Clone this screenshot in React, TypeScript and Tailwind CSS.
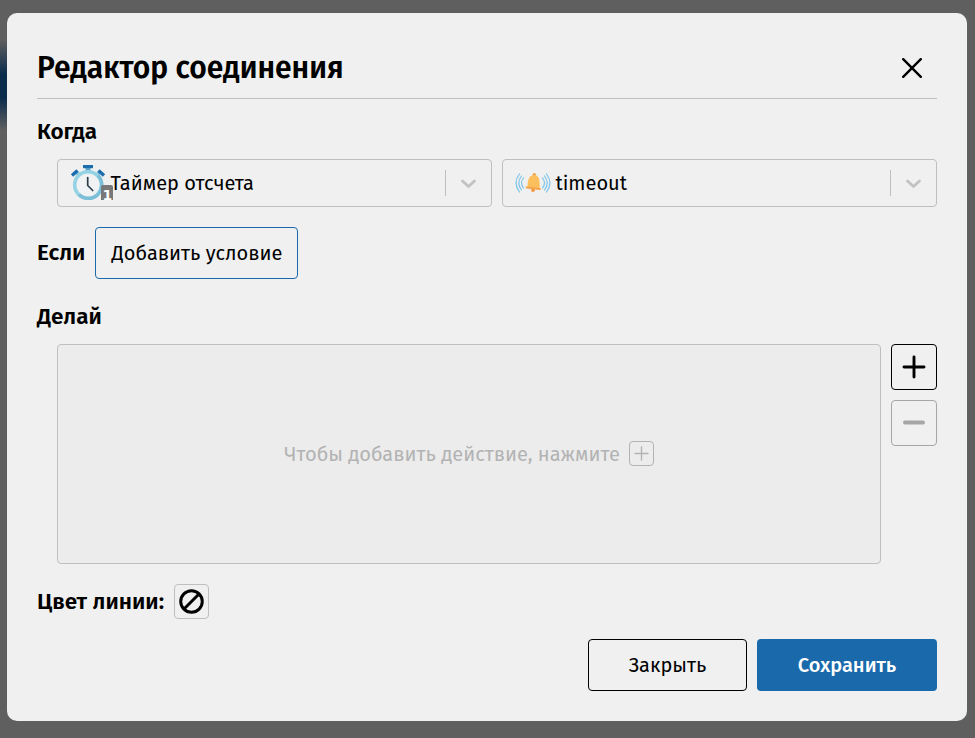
import React from "react";

const Chevron = () => (
  <div className="flex h-full items-center">
    <div className="h-[26px] w-px bg-[#bfbfbf]" />
    <div className="flex w-[45px] items-center justify-center">
      <svg width="17" height="11" viewBox="0 0 17 11" fill="none" stroke="#c2c2c2" strokeWidth="2.800" strokeLinecap="round" strokeLinejoin="round">
        <path d="M2.500 3l6 5.600L14.500 3" />
      </svg>
    </div>
  </div>
);

const Timer = () => (
  <svg width="44" height="40" viewBox="0 0 44 40" className="shrink-0 overflow-visible">
    <rect x="15.500" y="5" width="5" height="5" fill="#5fa3c8" />
    <path d="M6 9l4 4M30 9l-4 4" stroke="#8cc4dc" strokeWidth="4" />
    <rect x="13" y="2" width="10" height="3.200" fill="#1b6eae" />
    <path d="M2 12.500L7.500 7.500M28.500 7.500L34 12.500" stroke="#1b6eae" strokeWidth="3.400" />
    <circle cx="18" cy="22" r="13.300" fill="#f0f2f3" stroke="#94d2e4" strokeWidth="3.600" />
    <path d="M28 12.500A13.300 13.300 0 0 1 9 31.500" fill="none" stroke="#7cbdd8" strokeWidth="3.200" />
    <path d="M17.700 14.500v8l5 5" fill="none" stroke="#2c3e4a" strokeWidth="1.700" strokeLinecap="round" strokeLinejoin="round" />
    <path d="M33 22h8a2 2 0 0 1 2 2v13H31V24a2 2 0 0 1 2-2z" fill="#787878" />
    <text x="32.500" y="36.500" fill="#fff" className="font-['DejaVu_Sans'] text-[14px] font-bold">1</text>
  </svg>
);

const Bell = () => (
  <svg width="36" height="22" viewBox="0 0 36 22" className="shrink-0">
    <g fill="none" stroke="#7cc4ea" strokeWidth="1.200" strokeLinecap="round">
      <path d="M4.500 2Q-2.500 11 4.500 20M6.500 4Q1 11 6.500 18M8.500 6Q4.500 11 8.500 16" />
      <path d="M31.500 2Q38.500 11 31.500 20M29.500 4Q35 11 29.500 18M27.500 6Q31.500 11 27.500 16" />
    </g>
    <circle cx="19.300" cy="2.500" r="1.600" fill="#f39a43" />
    <circle cx="18" cy="18" r="2" fill="#f39a43" />
    <path d="M12.300 15.500c.7-3-.3-12.500 6.500-12.500s5.700 8 6 14z" fill="#fbbf5d" />
    <path d="M11.700 15.500L24.700 17" stroke="#f6a44c" strokeWidth="2.200" strokeLinecap="round" />
  </svg>
);

export default function App() {
  return (
    <div className="h-[738px] w-[975px] overflow-hidden bg-[#5f5f5f] bg-[linear-gradient(to_bottom,#5f5f5f_40px,#0b2d4c_74px,#0b2d4c_98px,#5f5f5f_130px)] bg-[length:7px_738px] bg-no-repeat pl-[7px] pt-[13px] font-['Fira_Sans','Noto_Sans',sans-serif] text-black">
      <div className="flex h-[708px] w-[960px] flex-col rounded-[10px] bg-[#f0f0f0] px-[30px] pt-[30px]">
        <header className="flex h-[56px] items-center justify-between border-b border-[#bfbfbf] pb-[5px] pr-[15px]">
          <h1 className="whitespace-nowrap text-[30px] font-semibold leading-none">Редактор соединения</h1>
          <svg width="20" height="20" viewBox="0 0 20 20" stroke="#000" strokeWidth="2.400" strokeLinecap="round">
            <path d="M1.200 1.200l17.600 17.600M18.800 1.200L1.200 18.800" />
          </svg>
        </header>
        <h2 className="mt-[18px] h-[30px] whitespace-nowrap text-[22.500px] font-semibold leading-[30px]">Когда</h2>
        <div className="ml-5 mt-3 flex gap-[10px]">
          <div className="flex h-12 w-[435px] items-center rounded border border-[#bfbfbf] pl-3">
            <Timer />
            <span className="-ml-[3.500px] flex-1 whitespace-nowrap text-[20px]">Таймер отсчета</span>
            <Chevron />
          </div>
          <div className="flex h-12 w-[435px] items-center rounded border border-[#bfbfbf] pl-3">
            <Bell />
            <span className="ml-[4.500px] flex-1 whitespace-nowrap text-[20px]">timeout</span>
            <Chevron />
          </div>
        </div>
        <div className="mt-5 flex h-[52px] items-center">
          <h2 className="w-[58px] whitespace-nowrap text-[22.500px] font-semibold leading-[30px]">Если</h2>
          <button className="h-[52px] w-[203px] whitespace-nowrap rounded border border-[#1a6aab] pl-px text-[20px]">Добавить условие</button>
        </div>
        <h2 className="mt-[23px] h-[30px] whitespace-nowrap text-[22.500px] font-semibold leading-[30px]">Делай</h2>
        <div className="ml-5 mt-3 flex gap-[10px]">
          <div className="flex h-[220px] w-[824px] items-center justify-center gap-[9px] rounded border border-[#bfbfbf] bg-[#ececec] text-[#b3b3b3]">
            <span className="whitespace-nowrap text-[20px]">Чтобы добавить действие, нажмите</span>
            <span className="mb-[2px] flex size-[25px] items-center justify-center rounded border border-[#b3b3b3]">
              <svg width="15" height="15" viewBox="0 0 15 15" stroke="#b3b3b3" strokeWidth="1.400" strokeLinecap="round"><path d="M7.500 1v13M1 7.500h13" /></svg>
            </span>
          </div>
          <div className="flex flex-col gap-[10px]">
            <button className="flex size-[46px] items-center justify-center rounded border border-black">
              <svg width="24" height="24" viewBox="0 0 24 24" stroke="#000" strokeWidth="2.900" strokeLinecap="round"><path d="M12 2v20M2 12h20" /></svg>
            </button>
            <button className="flex size-[46px] items-center justify-center rounded border border-[#a6a6a6]">
              <svg width="24" height="24" viewBox="0 0 24 24" stroke="#a6a6a6" strokeWidth="4" strokeLinecap="round"><path d="M3 11.500h18" /></svg>
            </button>
          </div>
        </div>
        <div className="mt-5 flex h-[35px] items-center">
          <h2 className="w-[137px] whitespace-nowrap text-[22.500px] font-semibold leading-[30px]">Цвет линии:</h2>
          <button className="flex size-[35px] items-center justify-center rounded border border-[#bfbfbf]">
            <svg width="25" height="25" viewBox="0 0 26 26" fill="none" stroke="#000" strokeWidth="3.100"><circle cx="13" cy="13" r="11.200" /><path d="M5.200 20.800L20.800 5.200" /></svg>
          </button>
        </div>
        <div className="mt-5 flex h-[52px] justify-end gap-[10px]">
          <button className="w-[159px] whitespace-nowrap rounded border border-black text-[20px]">Закрыть</button>
          <button className="w-[180px] whitespace-nowrap rounded bg-[#1a6aab] text-[20px] font-medium text-white">Сохранить</button>
        </div>
      </div>
    </div>
  );
}
